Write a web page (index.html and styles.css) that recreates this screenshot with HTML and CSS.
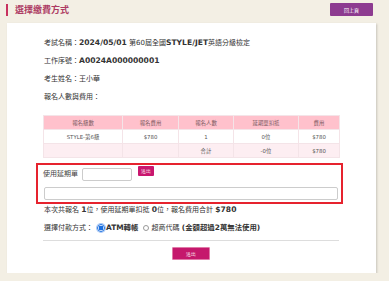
FILE: index.html
```html
<!DOCTYPE html>
<html lang="zh-Hant">
<head>
  <meta charset="UTF-8" />
  <title>選擇繳費方式</title>
  <meta name="viewport" content="width=device-width, initial-scale=1.0" />
  <link rel="stylesheet" href="styles.css">
</head>
<body>

  <!-- Cabeçalho -->
  <header class="topo">
    <h1 class="titulo">選擇繳費方式</h1>
    <a href="#" class="voltar-btn">回上頁</a>
  </header>

  <div class="card">
    <div class="info">
      <p>考試名稱：<b>2024/05/01</b> 第60屆全國<b>STYLE/JET</b>英語分級檢定</p>
      <p>工作序號：<b>A0024A000000001</b></p>
      <p>考生姓名：王小華</p>
      <p>報名人數與費用：</p>
    </div>

    <table class="tabela">
      <colgroup>
        <col style="width:79px"><col style="width:56px"><col style="width:55px"><col style="width:65px"><col style="width:41px">
      </colgroup>
      <tr class="cab">
        <th>報名級數</th><th>報名費用</th><th>報名人數</th><th>延期單扣抵</th><th>費用</th>
      </tr>
      <tr>
        <td>STYLE-第6級</td><td>$780</td><td>1</td><td>0位</td><td>$780</td>
      </tr>
      <tr class="total">
        <td></td><td></td><td>合計</td><td>-0位</td><td>$780</td>
      </tr>
    </table>

    <!-- Caixa destacada -->
    <div class="destaque">
      <div class="linha-cupom">
        <label for="cupom">使用延期單</label>
        <input type="text" id="cupom" class="campo-curto" />
        <button class="mini-btn">送出</button>
      </div>
      <input type="text" class="campo-largo" />
    </div>

    <p class="resumo">本次共報名 <b>1</b>位，使用延期單扣抵 <b>0</b>位，報名費用合計 <b>$780</b></p>

    <p class="pagamento">選擇付款方式：<span class="radio on"></span><b>ATM轉帳</b> <span class="radio"></span>超商代碼 <b>(金額超過2萬無法使用)</b></p>

    <hr class="divisor" />

    <div class="acoes">
      <button class="enviar-btn">送出</button>
    </div>
  </div>

</body>
</html>
```

FILE: styles.css
```css
/* Reset básico */
* { box-sizing: border-box; margin: 0; padding: 0; }

body {
  margin: 0;
  font-family: 'DejaVu Sans', 'Noto Sans CJK TC', sans-serif;
  background: #f3efe4;
  color: #333;
  font-size: 7px;
}

/* Cabeçalho */
.topo {
  display: flex;
  justify-content: space-between;
  align-items: flex-start;
  height: 23px;
  padding: 3px 16px 0 6px;
}

.titulo {
  margin-top: 1px;
  height: 12px;
  line-height: 12px;
  border-left: 2px solid #c8325f;
  padding-left: 7px;
  font-size: 9px;
  font-weight: bold;
  color: #ad3b63;
}

.voltar-btn {
  display: flex;
  align-items: center;
  justify-content: center;
  width: 43px;
  height: 13px;
  background: #8d3b90;
  color: #fff;
  font-size: 5px;
  text-decoration: none;
  border-radius: 1px;
}

/* Cartão branco */
.card {
  width: 369px;
  margin-left: 7px;
  background: #fff;
  padding: 11px 37px 13px 36px;
  box-shadow: 1px 1px 2px rgba(0,0,0,0.18);
}

.info p {
  line-height: 18px;
  padding-left: 1px;
}

.info b { font-size: 7.6px; }

/* Tabela */
.tabela {
  width: 296px;
  margin-top: 9px;
  border-collapse: collapse;
  table-layout: fixed;
  font-size: 5.4px;
  color: #555;
}
.tabela th, .tabela td {
  height: 14px;
  text-align: center;
  font-weight: normal;
  border: 1px solid #f4e4e8;
}
.tabela .cab th { background: #ffc1cc; color: #7a5860; }
.tabela .total td { background: #fdeef2; }

/* Caixa destacada */
.destaque {
  margin: 5px -4px 0 -7px;
  border: 2px solid #e6232e;
  padding: 1px 3px 2px 5px;
}

.linha-cupom {
  display: flex;
  align-items: flex-start;
}
.linha-cupom label {
  margin-top: 4px;
  line-height: 9px;
  color: #444;
}
.campo-curto {
  width: 50px;
  height: 13px;
  margin: 2px 0 0 4px;
  border: 1px solid #ccc;
  border-radius: 2px;
}
.mini-btn {
  width: 16px;
  height: 10px;
  margin-left: 6px;
  background: #c9176f;
  color: #fff;
  border: none;
  border-radius: 1px;
  font-size: 4.5px;
}
.campo-largo {
  display: block;
  width: 294px;
  height: 13px;
  margin: 6px 0 0 1px;
  border: 1px solid #ccc;
  border-radius: 2px;
}

.resumo {
  line-height: 12px;
  padding-left: 1px;
}
.resumo b { font-size: 7.6px; }

.pagamento {
  margin-top: 6px;
  line-height: 12px;
  padding-left: 1px;
}
.pagamento b { font-size: 7.4px; }

.radio {
  display: inline-block;
  vertical-align: middle;
  width: 6px;
  height: 6px;
  border: 1px solid #999;
  border-radius: 50%;
  margin: -1px 3px 0 2px;
}
.radio.on {
  width: 8px;
  height: 8px;
  border: 1px solid #1b6fe0;
  margin: -1px 1px 0 4px;
  background: radial-gradient(circle, #1b6fe0 0 2.2px, #fff 2.6px);
  box-shadow: 0 0 0 1px #a9c8f5;
}

.divisor {
  margin-top: 6px;
  border: none;
  border-top: 1px solid #ddd;
}

.acoes {
  display: flex;
  justify-content: center;
  margin-top: 6px;
}
.enviar-btn {
  width: 38px;
  height: 13px;
  background: #c5186c;
  color: #fff;
  border: 1px solid #e07aa8;
  border-radius: 1px;
  font-size: 5px;
}
```
